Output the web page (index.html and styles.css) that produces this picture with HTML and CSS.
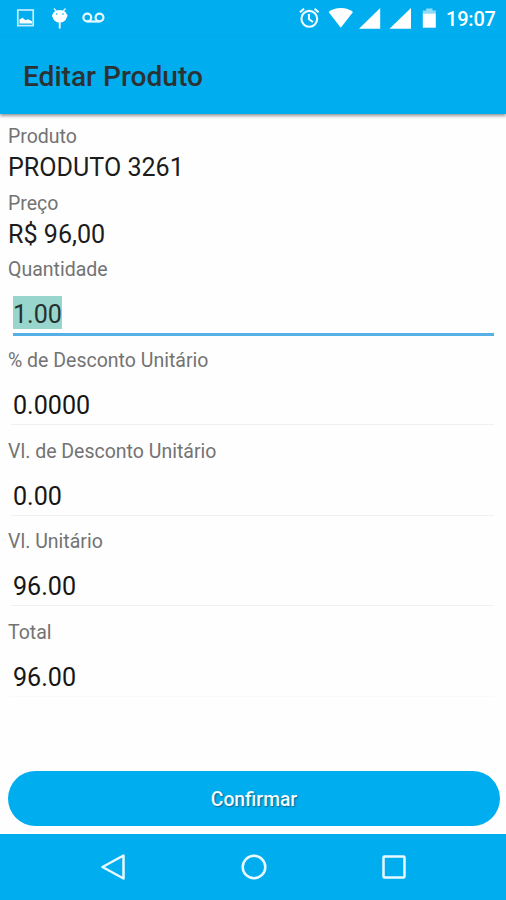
FILE: index.html
```html
<!DOCTYPE html>
<html lang="pt-BR">
<head>
<meta charset="utf-8">
<title>Editar Produto</title>
<link rel="stylesheet" href="styles.css">
</head>
<body>
<div class="screen">
  <div class="status">
    <svg class="status-left" width="120" height="36" viewBox="0 0 120 36">
      <rect x="17.8" y="10" width="15.4" height="15.6" fill="none" stroke="#c5edfc" stroke-width="1.7"/>
      <path d="M19.5 23.5v-4l3-1.8 3 2.6 2.5-1 4 2v2.2z" fill="#fff"/>
      <path d="M54 8.5l3 3.5M65.5 8.5l-3 3.5" stroke="#e8f8ff" stroke-width="1.2"/>
      <path d="M52.6 14.5Q54 10.300 59.700 10.300T66.800 14.500Q68.500 15.500 66.500 17.500Q65 22.500 59.700 22.500T53 17.500Q51 15.500 52.600 14.500z" fill="#fff"/>
      <ellipse cx="59.700" cy="16.300" rx="7" ry="6" fill="#fff"/>
      <path d="M59.700 22v6.500" stroke="#fff" stroke-width="1.800"/>
      <circle cx="56.600" cy="14" r=".8" fill="#00aeef"/><circle cx="63" cy="14" r=".8" fill="#00aeef"/>
      <g fill="none" stroke="#e8f8ff" stroke-width="2.200"><circle cx="87.300" cy="17.500" r="3.900"/><circle cx="99.500" cy="17.500" r="3.900"/><path d="M87.300 21.500h12.200"/></g>
    </svg>
    <svg class="status-right" width="146" height="36" viewBox="294 0 146 36">
      <g fill="none" stroke="#f2fbff" stroke-width="2.100"><circle cx="309.300" cy="18.800" r="7.900"/><path d="M309 14v5.300l4 2.700M300 12.200l4-3.400M318.600 12.200l-4-3.400"/></g>
      <path d="M328.600 12Q333.500 8 340.800 8T353 12L340.800 27.800z" fill="#fff"/>
      <path d="M380.200 8v20.800H359zM411 8v20.800H389.500z" fill="#fff"/>
      <path d="M426.200 8.500h6.300v2h3.300v3.500h-13v-3.500h3.400z" fill="#8edbf8"/>
      <path d="M422.800 13.700h13v14h-13z" fill="#fff"/>
    </svg>
    <span class="clock">19:07</span>
  </div>
  <header class="bar"><h1>Editar Produto</h1></header>
  <main class="form">
    <div class="info"><div class="label">Produto</div><div class="value">PRODUTO 3261</div></div>
    <div class="info"><div class="label">Preço</div><div class="value">R$ 96,00</div></div>
    <div class="field focused"><div class="label">Quantidade</div><div class="control"><span class="selected">1.00</span></div></div>
    <div class="field"><div class="label">% de Desconto Unitário</div><div class="control">0.0000</div></div>
    <div class="field"><div class="label">Vl. de Desconto Unitário</div><div class="control">0.00</div></div>
    <div class="field"><div class="label">Vl. Unitário</div><div class="control">96.00</div></div>
    <div class="field last"><div class="label">Total</div><div class="control">96.00</div></div>
  </main>
  <div class="actions"><button class="confirm">Confirmar</button></div>
  <nav class="nav">
    <svg width="28" height="30" viewBox="0 0 28 30"><path d="M24.500 3.500v23L3.500 15z"/></svg>
    <svg width="28" height="30" viewBox="0 0 28 30"><circle cx="14" cy="15" r="11.300"/></svg>
    <svg width="28" height="30" viewBox="0 0 28 30"><rect x="3.500" y="4.500" width="21" height="21" rx="1"/></svg>
  </nav>
</div>
</body>
</html>
```
FILE: styles.css
```css
* { box-sizing: border-box; }
body { margin: 0; font-family: Roboto, "Liberation Sans", sans-serif; background: #fefefe; }
.screen { width: 506px; height: 900px; display: flex; flex-direction: column; overflow: hidden; }
.status { height: 37px; flex: none; display: flex; background: #00aeef; color: #fff; }
.status svg { flex: none; }
.status-right { margin-left: 174px; }
.clock { margin-left: 6px; font-size: 20px; font-weight: 500; line-height: 38px; letter-spacing: -.2px; }
.bar { height: 77px; flex: none; padding-left: 23px; background: #00aeef; box-shadow: 0 2px 3px rgba(0, 0, 0, .4); }
.bar h1 { margin: 0; font-size: 28.1px; font-weight: 500; line-height: 79px; color: #2b3234; }
.form { flex: 1; padding: 10px 8px 0; }
.info { height: 66.7px; }
.label { font-size: 19.5px; line-height: 26px; color: #737373; white-space: nowrap; }
.value { font-size: 25.1px; line-height: 35px; color: #1c1c1c; }
.field { height: 90.7px; }
.control { height: 51px; margin: 0 4px 0 3px; padding: 17px 0 0 2px; border-bottom: 1px solid #f1f1f1; font-size: 25.1px; line-height: 30px; color: #161616; }
.focused .control { height: 53px; margin-left: 5px; margin-right: 4px; padding-left: 0; border-bottom: 3px solid #55b0e6; }
.last .control { border-color: #fafafa; }
.selected { padding: 4px 0 0; background: #98d5cc; color: #25302f; }
.actions { flex: none; padding: 0 6px 8px 8px; }
.confirm { display: block; width: 100%; height: 55px; padding: 3px 0 0; border: 0; border-radius: 28px; background: #00aeef; color: #f4fcff; font: 500 19.3px/1 Roboto, "Liberation Sans", sans-serif; text-shadow: 1px 1px 2px rgba(0, 0, 0, .45); }
.nav { height: 66px; flex: none; display: flex; justify-content: space-between; align-items: center; padding: 0 98px 0 99px; background: #00aeef; }
.nav svg { fill: none; stroke: #e8f9ff; stroke-width: 2.5; stroke-linejoin: round; }
```
